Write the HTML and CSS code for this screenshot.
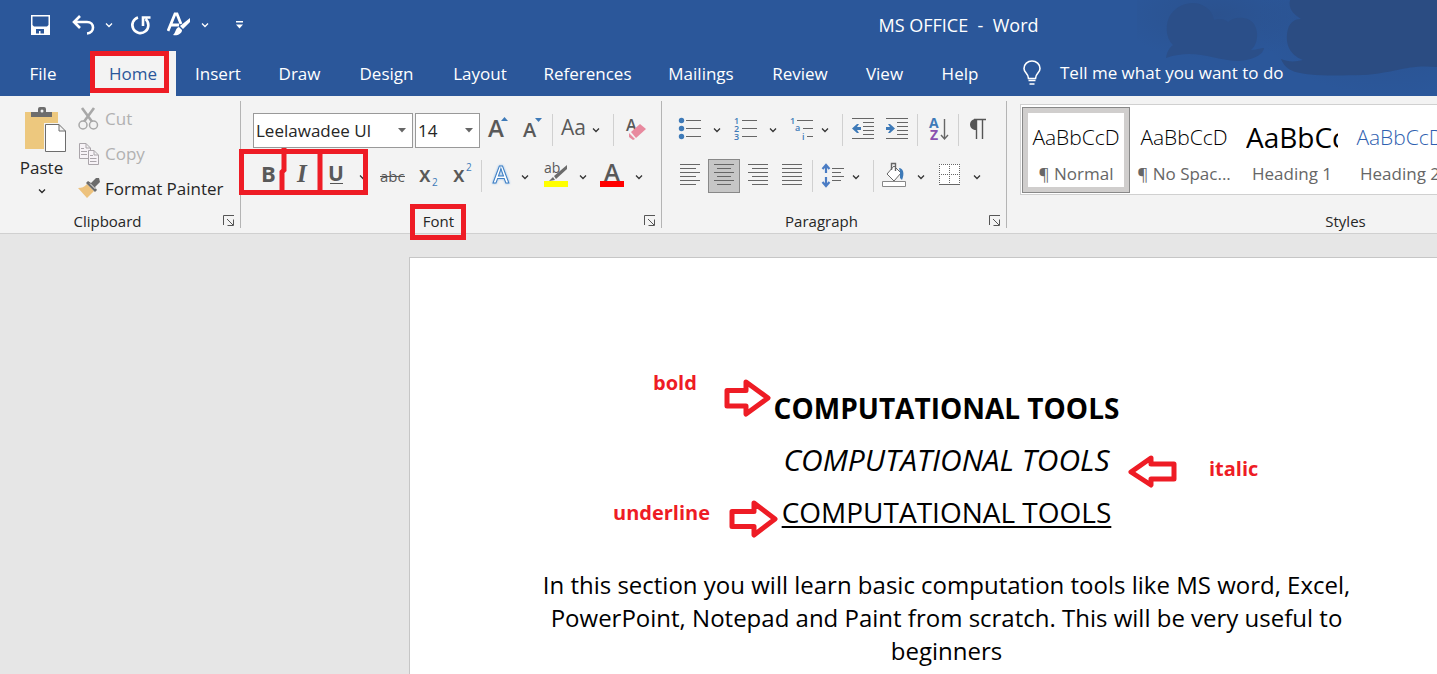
FILE: index.html
```html
<!DOCTYPE html>
<html lang="en">
<head>
<meta charset="utf-8">
<title>MS OFFICE - Word</title>
<link rel="stylesheet" href="styles.css">
</head>
<body>
<svg class="defs" aria-hidden="true">
  <symbol id="caret" viewBox="0 0 8 6" width="8" height="6"><path d="M1 1.500l3 3 3-3" fill="none" stroke="currentColor" stroke-width="1.300"/></symbol>
  <symbol id="launch" viewBox="0 0 12 12" width="12" height="12"><path d="M.5 10V.5H11M4 4l6 6M10.500 4.500V10.500H4.500" fill="none" stroke="#555"/></symbol>
</svg>

<header class="header">
  <svg class="backdrop" viewBox="0 0 300 96" aria-hidden="true">
    <defs><radialGradient id="haze"><stop offset="0" stop-color="#2b4c82" stop-opacity=".5"/><stop offset="1" stop-color="#2b4c82" stop-opacity="0"/></radialGradient></defs>
    <ellipse cx="80" cy="15" rx="100" ry="45" fill="url(#haze)"/>
    <ellipse cx="250" cy="20" rx="130" ry="75" fill="url(#haze)"/>
    <path d="M29 58C30 52 32 48 36 45 28 38 28 22 34 14 42 3 58 0 67 6 74 10 76 15 77 20 82 18 88 19 91 22 97 16 112 16 117 24 122 32 121 44 114 50 119 50 124 48 127 48 126 56 112 61 100 61 76 60 58 48 29 58Z" fill="#2b4f89"/>
    <path d="M153 0H300V67C270 64 258 73 226 75 160 77 150 73 144 59 151 62 158 62 166 60 150 54 148 40 151 29 153 22 158 19 164 19 156 14 151 8 153 0Z" fill="#2b4c82"/>
  </svg>
  <div class="titlebar">
    <div class="quick">
      <button class="q-save" aria-label="Save"><svg width="20" height="20" viewBox="0 0 20 20"><path fill-rule="evenodd" d="M1 0H20V20H1ZM2.500 1.500V10L4 11.500H17L18.500 10V1.500ZM6 14V18.500H9V16H10.500V18.500H14V14Z" fill="#fff"/></svg></button>
      <button class="q-undo" aria-label="Undo"><svg width="44" height="24" viewBox="0 0 44 24"><path d="M9 3L3 9l6 6M3 9H16C24 9 24 20 16 20.500" fill="none" stroke="#fff" stroke-width="2.600"/><use href="#caret" x="34" y="9"/></svg></button>
      <button class="q-redo" aria-label="Repeat"><svg width="22" height="24" viewBox="0 0 22 24"><path d="M8 4.500A8 8 0 1 0 15.500 6M13 13V4.500H20.500" fill="none" stroke="#fff" stroke-width="2.600"/></svg></button>
      <button class="q-style" aria-label="Format text"><svg width="44" height="26" viewBox="0 0 44 26"><path d="M1 19L8 2H10L14 12M4 13H12" fill="none" stroke="#fff" stroke-width="2.800"/><path d="M23 6V10L16 17 13 14ZM12 15L15 18C15 22 10 24 6 23 9 21 8 16 12 15Z" fill="#fff"/><use href="#caret" x="34" y="10"/></svg></button>
      <button class="q-more" aria-label="Customize toolbar"><svg width="9" height="8" viewBox="0 0 9 8"><path d="M1 0H8V1.500H1ZM1 3.500H8L4.500 7.500Z" fill="#fff"/></svg></button>
    </div>
    <h1 class="title">MS OFFICE&nbsp; -&nbsp; Word</h1>
  </div>
  <nav class="tabs">
    <a class="file" href="#">File</a>
    <a class="active" href="#">Home</a>
    <a href="#">Insert</a>
    <a href="#">Draw</a>
    <a href="#">Design</a>
    <a href="#">Layout</a>
    <a href="#">References</a>
    <a href="#">Mailings</a>
    <a href="#">Review</a>
    <a href="#">View</a>
    <a href="#">Help</a>
    <button class="tell"><svg width="20" height="26" viewBox="0 0 20 26"><path d="M6.500 18.500C6.500 13 2 13 2 8.500A8 7.500 0 0 1 18 8.500C18 13 13.500 13 13.500 18.500ZM6.500 20.500H13.500M7.500 24H12.500" fill="none" stroke="#fff" stroke-width="1.600"/></svg>Tell me what you want to do</button>
  </nav>
</header>

<section class="ribbon">
  <div class="group clipboard">
    <div class="clip-body">
      <button class="paste">
        <svg width="50" height="48" viewBox="-7 0 50 48"><path d="M1 5H34V42H1Z" fill="#edc87e"/><path d="M7 10V5H14V2Q14 0 16 0H20Q22 0 22 2V5H28V10Z" fill="#6d6d6d"/><circle cx="18" cy="4" r="1.500" fill="#f3f3f3"/><path d="M20 16H36L43 23V46H20Z" fill="#f3f3f3"/><path d="M21.500 17.500H35L41.500 24V44.500H21.500ZM35 17.500V24H41.500" fill="#fff" stroke="#6d6d6d"/></svg>
        <span>Paste</span>
        <svg class="dark" width="8" height="6"><use href="#caret"/></svg>
      </button>
      <div class="clip-list">
        <button class="off"><svg width="22" height="24" viewBox="0 0 22 24"><path d="M4 1L15 16M16 1L5 16" stroke="#a8a8a8" stroke-width="2.600"/><circle cx="5" cy="18" r="4" fill="#f3f3f3" stroke="#a8a8a8" stroke-width="1.500"/><circle cx="15.500" cy="18" r="4" fill="#f3f3f3" stroke="#a8a8a8" stroke-width="1.500"/></svg>Cut</button>
        <button class="off"><svg width="22" height="24" viewBox="0 0 22 24"><path d="M1.500 1.500H8L12.500 6V16.500H1.500ZM8 1.500V6H12M3 6.500H6M3 9.500H9M3 12.500H9" fill="#f7f3f7" stroke="#aaa5aa"/><path d="M10.500 8.500H16L20.500 13V22.500H10.500ZM16 8.500V13H20M12 13.500H15M12 16.500H18.500M12 19.500H18.500" fill="#f7f3f7" stroke="#aaa5aa"/></svg>Copy</button>
        <button><svg width="22" height="24" viewBox="0 0 22 24"><path d="M0 11C4 11 6 10 9 7L16 14 9 21Z" fill="#edc27d"/><path d="M8 6L10 4 13 6 18 1 21 1 22 5 17 10 19 13 17 15Z" fill="#6b6b6b"/><path d="M12 6.500L17.500 12" stroke="#f3f3f3"/></svg>Format Painter</button>
      </div>
    </div>
    <footer class="foot"><span>Clipboard</span><button aria-label="Clipboard settings"><svg width="12" height="12"><use href="#launch"/></svg></button></footer>
  </div>

  <div class="group font">
    <div class="rows">
      <div class="row">
        <div class="combo name"><input aria-label="Font name" value="Leelawadee UI"><svg width="8" height="5"><path d="M0 0H8L4 4.500Z" fill="#666"/></svg></div>
        <div class="combo size"><input aria-label="Font size" value="14"><svg width="8" height="5"><path d="M0 0H8L4 4.500Z" fill="#666"/></svg></div>
        <button aria-label="Grow font"><svg width="36" height="36"><text class="gl big" x="8" y="25">A</text><path d="M21 9L24.500 5 28 9Z" fill="#3e7ab8"/></svg></button>
        <button aria-label="Shrink font"><svg width="36" height="36"><text class="gl mid" x="7" y="25">A</text><path d="M19 6H26L22.500 10Z" fill="#3e7ab8"/></svg></button>
        <i class="sep"></i>
        <button aria-label="Change case"><svg width="60" height="36"><text class="gl aa" x="8" y="23">Aa</text><use href="#caret" x="39" y="15"/></svg></button>
        <i class="sep"></i>
        <button aria-label="Clear formatting"><svg width="43" height="36"><text class="gl small" x="12" y="19">A</text><path d="M17 20L26 12 32 17 22 26Z" fill="#e8899e"/><path d="M15 21L21 27 19 28 15 25Z" fill="#e8899e"/></svg></button>
      </div>
      <div class="row">
        <button aria-label="Bold"><svg width="32" height="36"><text class="gl bold" x="8" y="24">B</text></svg></button>
        <button aria-label="Italic"><svg width="34" height="36"><text class="gl ital" x="12" y="24">I</text></svg></button>
        <button aria-label="Underline"><svg width="56" height="36"><text class="gl und" x="9" y="23">U</text><path d="M11 25.500H24" stroke="#555"/><use href="#caret" x="40" y="16"/></svg></button>
        <button aria-label="Strikethrough"><svg width="36" height="36"><text class="gl abc" x="5" y="24">abc</text><path d="M5 18.500H30" stroke="#555"/></svg></button>
        <button aria-label="Subscript"><svg width="34" height="36"><text class="gl ex" x="8" y="24">x</text><text class="idx" x="21" y="28">2</text></svg></button>
        <button aria-label="Superscript"><svg width="36" height="36"><text class="gl ex" x="8" y="24">x</text><text class="idx" x="21" y="13">2</text></svg></button>
        <i class="sep"></i>
        <button aria-label="Text effects"><svg width="58" height="36"><text class="glow" x="11" y="25">A</text><use href="#caret" x="39" y="16"/></svg></button>
        <button aria-label="Highlight"><svg width="58" height="36"><text class="gl hl" x="4" y="15">ab</text><path d="M27 7V11L16 21 14 18ZM13 19L15 22 9 23Z" fill="#6b6b6b"/><path d="M4 23H28V29H4Z" fill="#ff0"/><use href="#caret" x="39" y="16"/></svg></button>
        <button aria-label="Font color"><svg width="58" height="36"><text class="gl big" x="6" y="23">A</text><path d="M2 23H26V29H2Z" fill="red"/><use href="#caret" x="37" y="16"/></svg></button>
      </div>
    </div>
    <footer class="foot"><span>Font</span><button aria-label="Font settings"><svg width="12" height="12"><use href="#launch"/></svg></button></footer>
    <svg class="marks" width="230" height="92" viewBox="0 0 230 92" aria-hidden="true"><path d="M2.500 3.500H126.500V44.500H2.500ZM45 0V22L43 24V44M81 1V44" fill="none" stroke="#ee1c25" stroke-width="5"/><path d="M173.500 58.500H224.500V89.500H173.500Z" fill="none" stroke="#ee1c25" stroke-width="5"/></svg>
  </div>

  <div class="group para">
    <div class="rows">
      <div class="row">
        <button aria-label="Bullets"><svg width="57" height="36"><g fill="#3e7ab8"><circle cx="11.500" cy="8.500" r="2.700"/><circle cx="11.500" cy="16.500" r="2.700"/><circle cx="11.500" cy="24.500" r="2.700"/></g><path class="ln" d="M16 8.500H31M16 16.500H31M16 24.500H31"/><use href="#caret" x="43" y="15"/></svg></button>
        <button aria-label="Numbering"><svg width="56" height="36"><text class="num" x="7" y="12">1</text><text class="num" x="7" y="20">2</text><text class="num" x="7" y="28">3</text><path class="ln" d="M15 8.500H30M15 16.500H30M15 24.500H30"/><use href="#caret" x="42" y="15"/></svg></button>
        <button aria-label="Multilevel list"><svg width="59" height="36"><text class="num" x="7" y="12">1</text><text class="num" x="12" y="19">a</text><text class="num" x="19" y="28">i</text><path class="ln" d="M14 8.500H30M20 16.500H30M24 24.500H30"/><use href="#caret" x="38" y="15"/></svg></button>
        <i class="sep"></i>
        <button aria-label="Decrease indent"><svg width="37" height="36"><path class="ln" d="M9 6.500H31M20 10.500H31M20 14.500H31M20 18.500H31M20 22.500H31M9 26.500H31"/><path d="M9 16.500L14 12H16L14 15H18V18H14L16 21H14Z" fill="#3e7ab8"/></svg></button>
        <button aria-label="Increase indent"><svg width="37" height="36"><path class="ln" d="M6 6.500H28M17 10.500H28M17 14.500H28M17 18.500H28M17 22.500H28M6 26.500H28"/><path d="M15 16.500L10 12H8L10 15H6V18H10L8 21H10Z" fill="#3e7ab8"/></svg></button>
        <i class="sep"></i>
        <button aria-label="Sort"><svg width="40" height="36"><text class="az" x="11" y="16">A</text><text class="az z" x="12" y="28">Z</text><path d="M26.500 7V27M23 23L26.500 27 30 23" fill="none" stroke="#666" stroke-width="1.400"/></svg></button>
        <i class="sep"></i>
        <button aria-label="Show marks"><svg width="38" height="36"><path d="M17 7C9 7 9 18 17 18Z" fill="#555"/><path d="M15 7.500H27M17.500 7V27M23.500 7V27" fill="none" stroke="#555" stroke-width="1.400"/></svg></button>
      </div>
      <div class="row aligns">
        <button aria-label="Align left"><svg width="34" height="36"><path class="ln" d="M6 6.500H26M6 10.500H22M6 14.500H26M6 18.500H22M6 22.500H26M6 26.500H22"/></svg></button>
        <button class="on" aria-label="Center"><svg width="30" height="32"><path class="ln" d="M5 4.500H25M8 8.500H22M5 12.500H25M8 16.500H22M5 20.500H25M8 24.500H22"/></svg></button>
        <button aria-label="Align right"><svg width="35" height="36"><path class="ln" d="M8 6.500H28M12 10.500H28M8 14.500H28M12 18.500H28M8 22.500H28M12 26.500H28"/></svg></button>
        <button aria-label="Justify"><svg width="37" height="36"><path class="ln" d="M7 6.500H27M7 10.500H27M7 14.500H27M7 18.500H27M7 22.500H27M7 26.500H27"/></svg></button>
        <i class="sep"></i>
        <button aria-label="Line spacing"><svg width="60" height="36"><path d="M13 7V15M13 19V28M9.500 11L13 7 16.500 11M9.500 24L13 28 16.500 24" fill="none" stroke="#4a7cc4" stroke-width="2.200"/><path class="ln" d="M19 10.500H31M19 14.500H28M19 18.500H31M19 22.500H28"/><use href="#caret" x="39" y="16"/></svg></button>
        <i class="sep"></i>
        <button aria-label="Shading"><svg width="56" height="36"><path d="M13 16L20 8 27 15 20 23Z" fill="#fff" stroke="#666"/><path d="M17.500 12V5.500H21.500V13" fill="none" stroke="#666" stroke-width="1.400"/><path d="M25 10C29 10 31 15 28 22L26 20V14Z" fill="#3e7ab8"/><path d="M8.500 23.500H31.500V28.500H8.500Z" fill="#fff" stroke="#888"/><use href="#caret" x="43" y="16"/></svg></button>
        <button aria-label="Borders"><svg width="56" height="36"><path d="M9 6H30V27H9Z" fill="#fff"/><path d="M9 6.500H30M9 16.500H30M9.500 6V26M19.500 6V26M29.500 6V26" stroke="#666" stroke-dasharray="1 1"/><path class="ln" d="M9 26.500H30"/><use href="#caret" x="43" y="16"/></svg></button>
      </div>
    </div>
    <footer class="foot"><span>Paragraph</span><button aria-label="Paragraph settings"><svg width="12" height="12"><use href="#launch"/></svg></button></footer>
  </div>

  <div class="group styles">
    <div class="gallery">
      <button class="card picked"><span class="sample">AaBbCcD</span><span class="label">¶ Normal</span></button>
      <button class="card"><span class="sample">AaBbCcD</span><span class="label">¶ No Spac...</span></button>
      <button class="card"><span class="sample h1">AaBbCc</span><span class="label">Heading 1</span></button>
      <button class="card"><span class="sample h2">AaBbCcD</span><span class="label">Heading 2</span></button>
    </div>
    <footer class="foot"><span>Styles</span></footer>
  </div>
</section>

<main class="desk">
  <article class="page">
    <p class="line strong">COMPUTATIONAL TOOLS</p>
    <p class="line slant">COMPUTATIONAL TOOLS</p>
    <p class="line under">COMPUTATIONAL TOOLS</p>
    <p class="text">In this section you will learn basic computation tools like MS word, Excel,<br>PowerPoint, Notepad and Paint from scratch. This will be very useful to<br>beginners</p>
    <div class="note n-bold"><span>bold</span><svg width="48" height="38" viewBox="0 0 48 38"><path d="M3 11.500H22V3L44 19 22 35V27H3Z"/></svg></div>
    <div class="note n-italic"><svg width="50" height="34" viewBox="0 0 50 34"><path d="M47 9H24V3L4 17 24 30V24H47Z"/></svg><span>italic</span></div>
    <div class="note n-under"><span>underline</span><svg width="50" height="40" viewBox="0 0 50 40"><path d="M3 12.500H25V4L46 20 25 36V27.500H3Z"/></svg></div>
  </article>
</main>
</body>
</html>
```
FILE: styles.css
```css
*, *::after { box-sizing: border-box; }
body {
  margin: 0;
  min-height: 100vh;
  display: flex;
  flex-direction: column;
  overflow: hidden;
  background: #e6e6e6;
  color: #262626;
  font-family: "Open Sans", "Noto Sans", sans-serif;
  font-size: 17px;
}
button { padding: 0; border: 0; background: none; color: inherit; font: inherit; }
svg { display: block; flex: none; }
.defs { position: absolute; width: 0; height: 0; }

/* Header */
.header { position: relative; background: #2b579a; color: #fff; }
.backdrop { position: absolute; top: 0; right: 0; height: 96px; }
.titlebar {
  position: relative;
  display: grid;
  grid-template-columns: 480px 1fr;
  align-items: center;
  height: 51px;
  padding-bottom: 2px;
}
.quick { display: flex; align-items: center; padding-left: 30px; }
.q-undo { margin-left: 21px; }
.q-redo { margin-left: 15px; }
.q-style { margin-left: 15px; }
.q-more { margin-left: 24px; }
.title { margin: 0; text-align: center; font-size: 18px; font-weight: 400; }
.tabs {
  position: relative;
  display: grid;
  grid-template-columns: 90px 86px 84px 79px 95px 92px 123px 104px 94px 75px 76px 1fr;
  height: 45px;
}
.tabs a { color: inherit; text-decoration: none; text-align: center; line-height: 45px; }
.tabs .file { padding-right: 4px; }
.tabs .active { position: relative; background: #f3f3f3; color: #2b579a; }
.tabs .active::after {
  content: "";
  position: absolute;
  top: 0;
  left: 0;
  width: 79px;
  height: 42px;
  border: 5px solid #ee1c25;
}
.tell { display: flex; align-items: center; gap: 18px; padding: 0 0 2px 24px; }

/* Ribbon */
.ribbon {
  display: flex;
  height: 138px;
  background: #f3f3f3;
  border-bottom: 1px solid #d0d0d0;
}
.group {
  position: relative;
  display: flex;
  flex-direction: column;
  justify-content: space-between;
  flex: none;
  margin: 5px 0;
  border-right: 1px solid #b4b4b4;
}
.foot { display: flex; align-items: center; height: 14px; padding-right: 5px; font-size: 15px; line-height: 14px; }
.foot span { flex: 1; padding-right: 8px; text-align: center; }
.rows { display: flex; flex-direction: column; gap: 10px; padding-top: 11px; color: #333; }
.row { display: flex; align-items: center; height: 36px; }
.sep { width: 1px; height: 32px; background: #d0d0d0; }

.clipboard { width: 241px; }
.clip-body { display: flex; gap: 14px; padding-left: 19px; }
.paste { display: flex; flex-direction: column; align-items: center; width: 45px; padding-top: 6px; }
.paste span { line-height: 26px; }
.paste .dark { margin-top: 7px; }
.clip-list { display: flex; flex-direction: column; }
.clip-list button { display: flex; align-items: center; gap: 5px; height: 35px; white-space: nowrap; }
.clip-list .off { color: #b1b1b1; }

.font { width: 421px; }
.font .rows { padding-left: 12px; }
.combo { display: flex; align-items: center; height: 35px; padding-right: 6px; background: #fff; border: 1px solid #999; }
.combo input { flex: 1; min-width: 0; padding: 0 0 0 2px; border: 0; background: none; color: #262626; font: inherit; }
.name { width: 160px; margin-right: 2px; }
.size { width: 65px; }
.gl { fill: #595959; font-weight: 600; }
.big { font-size: 24px; }
.mid { font-size: 20px; }
.aa { font-size: 21px; font-weight: 400; }
.small { font-size: 16px; }
.bold { font-size: 22px; font-weight: 700; }
.ital { font-family: "Liberation Serif", serif; font-size: 25px; font-style: italic; font-weight: 700; }
.und { font-size: 21px; font-weight: 700; }
.abc { font-size: 15px; font-weight: 400; }
.ex { font-size: 21px; }
.idx { fill: #3e7ab8; font-size: 10px; }
.hl { font-size: 14px; font-weight: 400; }
.glow { fill: #fff; stroke: #3e7fc4; stroke-width: 1px; font-size: 24px; font-weight: 600; filter: drop-shadow(0 0 1px #8ab8e8); }
.marks { position: absolute; top: 47px; left: -2px; pointer-events: none; }

.para { width: 345px; }
.para .rows { padding-left: 8px; }
.aligns { padding-left: 4px; }
.ln { fill: none; stroke: #666; }
.num { fill: #3e7ab8; font-size: 9px; font-weight: 600; }
.az { fill: #3e7ab8; font-size: 14px; font-weight: 700; }
.z { fill: #8a4fb0; }
.on { border: 1px solid #888; background: #c6c6c6; }

.styles { flex: 1 0 430px; min-width: 0; overflow-x: clip; border-right: 0; }
.styles .foot { width: 682px; }
.styles .foot span { padding-right: 0; }
.gallery { display: flex; align-items: center; height: 91px; margin: 3px 0 0 13px; padding: 0 1px; overflow: hidden; background: #fff; border: 1px solid #d0d0d0; border-right: 0; }
.card { display: flex; flex: none; flex-direction: column; align-items: center; gap: 5px; width: 108px; height: 86px; padding-top: 10px; overflow: hidden; }
.picked { padding-top: 9px; border: 1px solid #888; outline: 5px solid #d0cecd; outline-offset: -6px; }
.sample { width: 92px; overflow: hidden; color: #000; font-size: 21px; font-weight: 300; line-height: 40px; white-space: nowrap; }
.h1 { font-size: 28px; font-weight: 400; }
.h2 { color: #2f5fb0; }
.label { color: #666; line-height: 24px; white-space: nowrap; }

/* Document */
.desk { display: flex; flex: 1; padding: 23px 0 0 409px; }
.page {
  position: relative;
  flex: 1;
  padding: 124px 0 0 46px;
  background: #fff;
  border: 1px solid #c6c6c6;
  border-width: 1px 0 0 1px;
  color: #000;
  text-align: center;
}
.line { margin: 0; font-size: 28px; line-height: 52px; }
.strong { font-weight: 700; }
.slant { font-size: 30px; font-style: italic; }
.under { text-decoration: underline; text-decoration-thickness: 2px; text-underline-offset: 3px; }
.text { margin: 30px 0 0; font-size: 24px; line-height: 33px; }
.note { position: absolute; display: flex; align-items: flex-start; color: #ee1c25; font-size: 20px; font-weight: 700; line-height: 28px; }
.note path { fill: #fff; stroke: #ee1c25; stroke-width: 5px; stroke-linejoin: round; }
.n-bold { top: 111px; left: 243px; gap: 27px; height: 48px; }
.n-bold svg { align-self: flex-end; }
.n-italic { top: 197px; left: 717px; gap: 32px; }
.n-under { top: 241px; left: 203px; gap: 19px; }
```
